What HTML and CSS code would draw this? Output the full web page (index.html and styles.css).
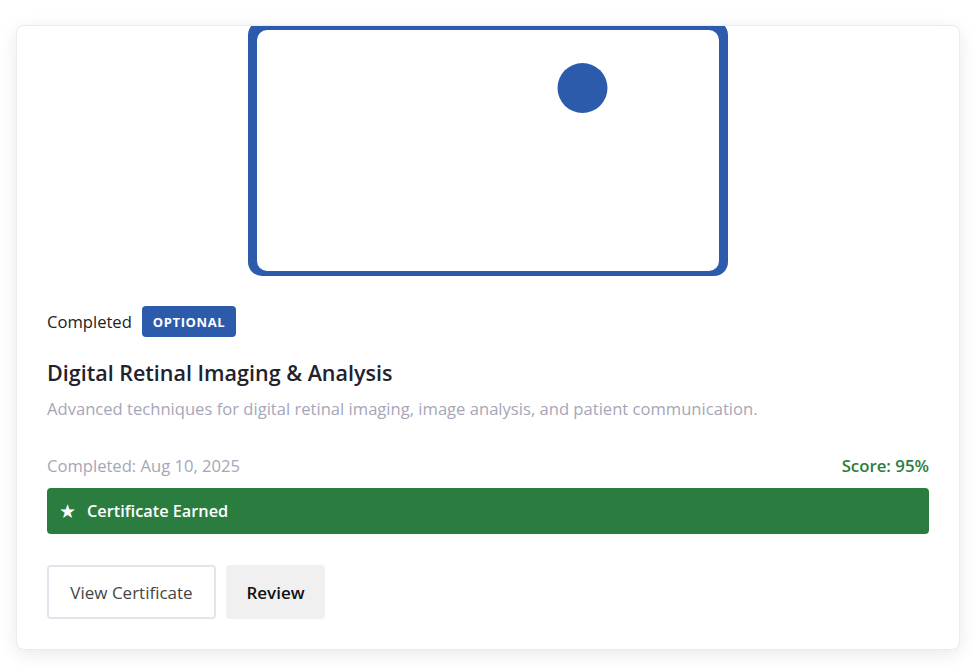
FILE: index.html
```html
<!DOCTYPE html>
<html lang="en">
<head>
<meta charset="utf-8">
<title>Course Card</title>
<link rel="stylesheet" href="styles.css">
</head>
<body>
<div class="card">
  <div class="thumb">
    <svg viewBox="0 0 942 251" preserveAspectRatio="none" aria-hidden="true">
      <path fill="#2d5bab" fill-rule="evenodd" d="M245 -5 H697 A14 14 0 0 1 711 9 V236 A14 14 0 0 1 697 250 H245 A14 14 0 0 1 231 236 V9 A14 14 0 0 1 245 -5 Z M250 4 H692 A10 10 0 0 1 702 14 V235 A10 10 0 0 1 692 245 H250 A10 10 0 0 1 240 235 V14 A10 10 0 0 1 250 4 Z"/>
      <circle cx="565.5" cy="62" r="25" fill="#2d5bab"/>
    </svg>
  </div>
  <div class="body">
    <div class="meta">
      <span class="status">Completed</span>
      <span class="badge">OPTIONAL</span>
    </div>
    <h2 class="title">Digital Retinal Imaging &amp; Analysis</h2>
    <p class="desc">Advanced techniques for digital retinal imaging, image analysis, and patient communication.</p>
    <div class="info">
      <span class="date">Completed: Aug 10, 2025</span>
      <span class="score">Score: 95%</span>
    </div>
    <div class="cert"><span class="star">★</span><span>Certificate Earned</span></div>
    <div class="actions">
      <button class="btn btn-outline">View Certificate</button>
      <button class="btn btn-soft">Review</button>
    </div>
  </div>
</div>
</body>
</html>
```
FILE: styles.css
```css
* { box-sizing: border-box; }
html, body { margin: 0; padding: 0; background: #fff; }
body {
  font-family: "Open Sans", "Noto Sans", sans-serif;
  color: #222;
  padding: 25px 19px 22px 16px;
}
.card {
  background: #fff;
  border: 1px solid #ebebeb;
  border-radius: 8px;
  box-shadow: 0 4px 18px rgba(0,0,0,0.09);
  overflow: hidden;
}
.thumb svg { display: block; width: 100%; height: 251px; }
.body { padding: 29px 30px 30px; }
.meta { display: flex; align-items: center; gap: 10px; height: 31px; }
.status { font-size: 16.6px; color: #222; }
.badge {
  background: #2d5bab;
  color: #fff;
  font-weight: 700;
  font-size: 13px;
  letter-spacing: 0.6px;
  height: 31px;
  padding: 0 11px;
  display: inline-flex;
  align-items: center;
  border-radius: 4px;
}
.title {
  margin: 21px 0 0;
  font-size: 21.5px;
  font-weight: 600;
  line-height: 29px;
  color: #22222e;
}
.desc {
  margin: 10px 0 0;
  font-size: 16.6px;
  line-height: 24px;
  color: #a6a6b8;
}
.info {
  margin-top: 33px;
  display: flex;
  justify-content: space-between;
  align-items: center;
  line-height: 24px;
}
.date { font-size: 16.6px; color: #a6a6b8; }
.score { font-size: 16.8px; font-weight: 600; color: #2a7d3f; }
.cert {
  margin-top: 10px;
  height: 46px;
  background: #2a7d3f;
  border-radius: 4px;
  color: #fff;
  display: flex;
  align-items: center;
  gap: 11px;
  padding: 0 12px;
  font-weight: 600;
  font-size: 16.3px;
}
.star { font-size: 19px; line-height: 1; font-family: "DejaVu Sans", sans-serif; }
.actions { margin-top: 31px; display: flex; gap: 10px; }
.btn {
  font-family: inherit;
  height: 54px;
  border-radius: 4px;
  font-size: 17px;
  padding: 0 20px;
  cursor: pointer;
}
.btn-outline { background: #fff; border: 2px solid #e4e4ec; color: #454545; width: 169px; }
.btn-soft { background: #f0f0f0; border: none; color: #111; font-weight: 600; width: 99px; }
```
